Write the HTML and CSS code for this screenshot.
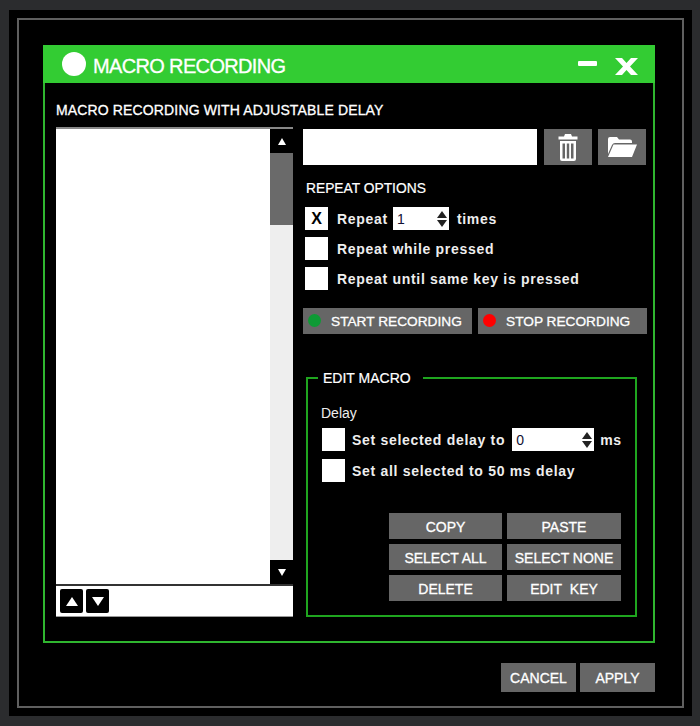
FILE: index.html
```html
<!DOCTYPE html>
<html lang="en">
<head>
    <meta charset="UTF-8">
    <title>Macro Recording</title>
    <link rel="stylesheet" href="styles.css">
</head>
<body>
    <div class="frame">
        <div class="frame-inner">
            <div class="dialog">
                <div class="dialog-header">
                    <span class="header-dot"></span>
                    <h1 class="header-title">MACRO RECORDING</h1>
                    <svg class="icon-min" width="19" height="5" viewBox="0 0 19 5"><rect width="19" height="5" rx="1" fill="#fff"/></svg>
                    <svg class="icon-close" width="23" height="17" viewBox="0 0 23 17"><path d="M0 0H7L11.500 5 16 0H23L15 8.500 23 17H16L11.500 12 7 17H0L8 8.500Z" fill="#fff"/></svg>
                </div>
                <div class="dialog-body">
                    <h2 class="section-title">MACRO RECORDING WITH ADJUSTABLE DELAY</h2>
                    <div class="columns">
                        <div class="list-col">
                            <div class="list-box">
                                <div class="list-items"></div>
                                <div class="scrollbar">
                                    <div class="scroll-btn"><span class="tri-up"></span></div>
                                    <div class="scroll-thumb"></div>
                                    <div class="scroll-track"></div>
                                    <div class="scroll-btn"><span class="tri-down"></span></div>
                                </div>
                            </div>
                            <div class="list-tools">
                                <div class="tool-btn"><span class="tri-up tri-big"></span></div>
                                <div class="tool-btn"><span class="tri-down tri-big"></span></div>
                            </div>
                        </div>
                        <div class="side-col">
                            <div class="name-row">
                                <div class="name-input"></div>
                                <div class="btn icon-btn">
                                    <svg width="20" height="27" viewBox="0 0 20 27"><path d="M7 0H13L14 2.500H19.500V5.500H.5V2.500H6Z" fill="#fff"/><path d="M2 7H18V25Q18 27 16 27H4Q2 27 2 25ZM4.500 9.500V24.500H7V9.500ZM8.800 9.500V24.500H11.200V9.500ZM13 9.500V24.500H15.500V9.500Z" fill="#fff" fill-rule="evenodd"/></svg>
                                </div>
                                <div class="btn icon-btn">
                                    <svg width="29" height="20" viewBox="0 0 29 20"><path d="M0 17V2Q0 0 2 0H9L11 2.500H22Q24 2.500 24 4.500V6H7Q5 6 4 8Z" fill="#fff"/><path d="M5.500 7.500H29L24 20H0Z" fill="#fff"/></svg>
                                </div>
                            </div>
                            <div class="repeat-title">REPEAT OPTIONS</div>
                            <div class="opt-row">
                                <span class="check">X</span>
                                <span class="opt-text">Repeat</span>
                                <div class="spinner spinner-small">
                                    <span class="spin-value">1</span>
                                    <span class="spin-arrows"><span class="arrow-up"></span><span class="arrow-down"></span></span>
                                </div>
                                <span class="opt-text">times</span>
                            </div>
                            <div class="opt-row">
                                <span class="check"></span>
                                <span class="opt-text">Repeat while pressed</span>
                            </div>
                            <div class="opt-row">
                                <span class="check"></span>
                                <span class="opt-text">Repeat until same key is pressed</span>
                            </div>
                            <div class="record-row">
                                <div class="btn record-btn"><span class="dot dot-green"></span>START RECORDING</div>
                                <div class="btn record-btn"><span class="dot dot-red"></span>STOP RECORDING</div>
                            </div>
                            <fieldset class="edit-box">
                                <legend class="edit-legend">EDIT MACRO</legend>
                                <div class="delay-label">Delay</div>
                                <div class="opt-row delay-row">
                                    <span class="check"></span>
                                    <span class="opt-text">Set selected delay to</span>
                                    <div class="spinner spinner-wide">
                                        <span class="spin-value">0</span>
                                        <span class="spin-arrows"><span class="arrow-up"></span><span class="arrow-down"></span></span>
                                    </div>
                                    <span class="opt-text">ms</span>
                                </div>
                                <div class="opt-row delay-row">
                                    <span class="check"></span>
                                    <span class="opt-text">Set all selected to 50 ms delay</span>
                                </div>
                                <div class="edit-grid">
                                    <div class="btn">COPY</div>
                                    <div class="btn">PASTE</div>
                                    <div class="btn">SELECT ALL</div>
                                    <div class="btn">SELECT NONE</div>
                                    <div class="btn">DELETE</div>
                                    <div class="btn">EDIT&nbsp; KEY</div>
                                </div>
                            </fieldset>
                        </div>
                    </div>
                </div>
            </div>
            <div class="dialog-footer">
                <div class="btn footer-btn">CANCEL</div>
                <div class="btn footer-btn">APPLY</div>
            </div>
        </div>
    </div>
</body>
</html>
```

FILE: styles.css
```css
* {
    margin: 0;
    padding: 0;
    box-sizing: border-box;
    font-family: "Liberation Sans", Arial, sans-serif;
}

body {
    width: 700px;
    height: 726px;
    overflow: hidden;
    background: #2b2c2e;
    padding: 10px 8px 10px 9px;
    color: #fff;
}

.frame {
    height: 706px;
    background: #000;
    padding: 8px;
}

.frame-inner {
    height: 690px;
    border: 2px solid #5f5f5f;
    padding: 25px 27px 0 24px;
}

.dialog {
    height: 598px;
    border: 2px solid #2fb52f;
    border-top: 0;
}

.dialog-header {
    display: flex;
    align-items: center;
    height: 38px;
    margin: 0 -2px;
    padding-left: 19px;
    background: #33cc33;
}

.header-dot {
    width: 24px;
    height: 24px;
    border-radius: 50%;
    background: #fff;
    margin-right: 7px;
}

.header-title {
    margin-top: 4px;
    font-size: 20px;
    font-weight: normal;
    letter-spacing: -0.65px;
    -webkit-text-stroke: 0.3px #fff;
}

.icon-min {
    margin-left: auto;
    margin-bottom: 1px;
}

.icon-close {
    margin-left: 18px;
    margin-right: 17px;
    margin-top: 4px;
}

.dialog-body {
    padding: 17px 11px 0 11px;
}

.section-title {
    font-size: 14px;
    font-weight: normal;
    line-height: 20px;
    letter-spacing: 0.14px;
    -webkit-text-stroke: 0.3px #fff;
}

.columns {
    display: flex;
    gap: 10px;
    margin-top: 7px;
}

.list-col {
    flex: none;
    width: 237px;
}

.list-box {
    display: flex;
    height: 459px;
    background: #fff;
    border-top: 2px solid #888;
    border-bottom: 2px solid #333;
}

.list-items {
    flex: 1;
}

.scrollbar {
    width: 23px;
    display: flex;
    flex-direction: column;
    background: #eee;
}

.scroll-btn {
    height: 24px;
    background: #000;
    display: flex;
    align-items: center;
    justify-content: center;
}

.scroll-thumb {
    height: 72px;
    background: #6a6a6a;
}

.scroll-track {
    flex: 1;
}

.tri-up {
    border-left: 4px solid transparent;
    border-right: 4px solid transparent;
    border-bottom: 7px solid #fff;
}

.tri-down {
    border-left: 4px solid transparent;
    border-right: 4px solid transparent;
    border-top: 7px solid #fff;
}

.tri-up.tri-big {
    border-width: 0 6px 9px;
    border-color: transparent transparent #fff;
}

.tri-down.tri-big {
    border-width: 9px 6px 0;
    border-color: #fff transparent transparent;
}

.list-tools {
    display: flex;
    gap: 3px;
    height: 31px;
    padding: 3px 4px;
    background: #fff;
    border-bottom: 1px solid #999;
}

.tool-btn {
    width: 23px;
    height: 24px;
    background: #000;
    border-radius: 2px;
    display: flex;
    align-items: center;
    justify-content: center;
}

.side-col {
    flex: none;
    width: 344px;
    padding-top: 2px;
}

.name-row {
    display: flex;
    gap: 6px;
}

.name-input {
    width: 234px;
    height: 36px;
    background: #fff;
    margin-right: 1px;
}

.btn {
    display: flex;
    align-items: center;
    justify-content: center;
    padding-top: 1px;
    background: #666;
    color: #fff;
    font-size: 14px;
    -webkit-text-stroke: 0.3px #fff;
}

.icon-btn {
    width: 48px;
    height: 36px;
    padding-top: 0;
}

.repeat-title {
    margin: 14px 0 8px 3px;
    font-size: 13.800px;
    line-height: 20px;
    -webkit-text-stroke: 0.2px #fff;
}

.opt-row {
    display: flex;
    align-items: center;
    height: 23px;
    margin-bottom: 7px;
    margin-left: 2px;
    white-space: nowrap;
}

.check {
    flex: none;
    width: 23px;
    height: 23px;
    margin-right: 9px;
    background: #fff;
    color: #000;
    font-size: 16px;
    font-weight: bold;
    line-height: 23px;
    text-align: center;
}

.opt-text {
    font-size: 14px;
    font-weight: bold;
    letter-spacing: 0.7px;
    color: #eee;
}

.spinner {
    flex: none;
    display: flex;
    align-items: center;
    justify-content: space-between;
    height: 23px;
    background: #fff;
    color: #113;
    font-size: 14px;
    padding: 0 2px 0 4px;
}

.spinner-small {
    width: 56px;
    margin: 0 8px 0 5px;
}

.spinner-wide {
    width: 82px;
    margin: 0 6px 0 7px;
}

.spin-arrows {
    display: flex;
    flex-direction: column;
    gap: 2px;
}

.arrow-up {
    border-left: 5px solid transparent;
    border-right: 5px solid transparent;
    border-bottom: 7px solid #222;
}

.arrow-down {
    border-left: 5px solid transparent;
    border-right: 5px solid transparent;
    border-top: 7px solid #222;
}

.record-row {
    display: flex;
    gap: 6px;
    margin-top: 18px;
}

.record-btn {
    position: relative;
    width: 169px;
    height: 26px;
    justify-content: flex-start;
    padding-left: 28px;
    font-size: 13.700px;
}

.dot {
    position: absolute;
    left: 5px;
    top: 6px;
    width: 13px;
    height: 13px;
    border-radius: 50%;
}

.dot-green {
    background: #0e9a35;
}

.dot-red {
    background: #f00;
}

.edit-box {
    width: 331px;
    height: 247px;
    margin: 36px 0 0 3px;
    padding: 0 12px 0 14px;
    border: 2px solid #1fa51f;
}

.edit-legend {
    margin-left: -4px;
    padding: 0 12px 0 5px;
    font-size: 14px;
    line-height: 16px;
    -webkit-text-stroke: 0.2px #fff;
}

.delay-label {
    margin: 19px 0 0 -1px;
    font-size: 14px;
    line-height: 16px;
    color: #eee;
}

.delay-row {
    margin: 7px 0 8px 0;
}

.delay-row .check {
    margin-right: 7px;
}

.edit-grid {
    display: grid;
    grid-template-columns: 113px 114px;
    grid-template-rows: 26px 26px 26px;
    gap: 5px;
    margin: 31px 0 0 67px;
}

.dialog-footer {
    display: flex;
    justify-content: flex-end;
    gap: 4px;
    margin-top: 20px;
}

.footer-btn {
    width: 75px;
    height: 29px;
}
```
